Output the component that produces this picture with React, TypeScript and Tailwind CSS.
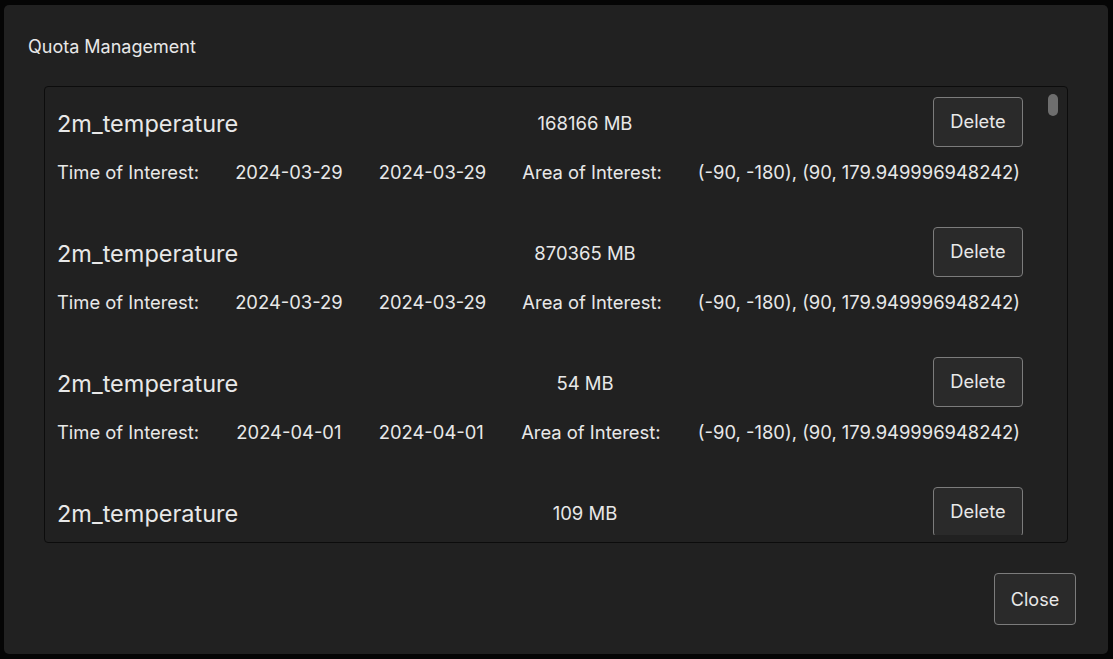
import React from "react";

const items = [
  { name: "2m_temperature", size: "168166 MB", d1: "2024-03-29", d2: "2024-03-29" },
  { name: "2m_temperature", size: "870365 MB", d1: "2024-03-29", d2: "2024-03-29" },
  { name: "2m_temperature", size: "54 MB", d1: "2024-04-01", d2: "2024-04-01" },
  { name: "2m_temperature", size: "109 MB", d1: "2024-04-01", d2: "2024-04-01" },
];

export default function App() {
  return (
    <div
      className="w-[1113px] h-[659px] bg-[#050505] pt-[5px] pl-[4px] overflow-hidden"
      style={{ fontFamily: "Inter, 'Noto Sans', sans-serif" }}
    >
      <div className="w-[1104px] h-[649px] bg-[#212121] rounded-[5px] flex flex-col text-[#e8e8e8]">
        <div className="pl-[24px] pt-[31px] h-[81px] text-[18px] leading-[22px]">Quota Management</div>
        <div className="ml-[40px] w-[1024px] h-[457px] border border-[#0c0c0c] rounded-[4px] p-[7px] relative">
          <div className="h-[441px] overflow-hidden pl-[5px] pr-[37px] pt-[3px]">
            {items.map((it, i) => (
              <div key={i} className="h-[130px]">
                <div className="flex items-start justify-between h-[51px]">
                  <div className="text-[23.5px] leading-[28px] w-[180px] whitespace-nowrap mt-[13px]">{it.name}</div>
                  <div className="text-[18.5px] leading-[24px] mt-[14px]">{it.size}</div>
                  <button className="w-[90px] h-[50px] border border-[#7c7c7c] bg-[#2a2a2a] rounded-[4px] text-[18.3px] text-[#e8e8e8]">
                    Delete
                  </button>
                </div>
                <div className="flex justify-between mt-[12px] text-[18.4px] leading-[24px] pr-[3px] whitespace-nowrap">
                  <span>Time of Interest:</span>
                  <span>{it.d1}</span>
                  <span>{it.d2}</span>
                  <span>Area of Interest:</span>
                  <span>(-90, -180), (90, 179.949996948242)</span>
                </div>
              </div>
            ))}
          </div>
          <div className="absolute right-[9px] top-[7px] w-[10px] h-[22px] rounded-[5px] bg-[#6e6e6e]" />
        </div>
        <div className="flex justify-end pr-[32px] pt-[30px]">
          <button className="w-[82px] h-[52px] border border-[#7c7c7c] bg-[#2a2a2a] rounded-[4px] text-[18px] text-[#e8e8e8]">
            Close
          </button>
        </div>
      </div>
    </div>
  );
}
